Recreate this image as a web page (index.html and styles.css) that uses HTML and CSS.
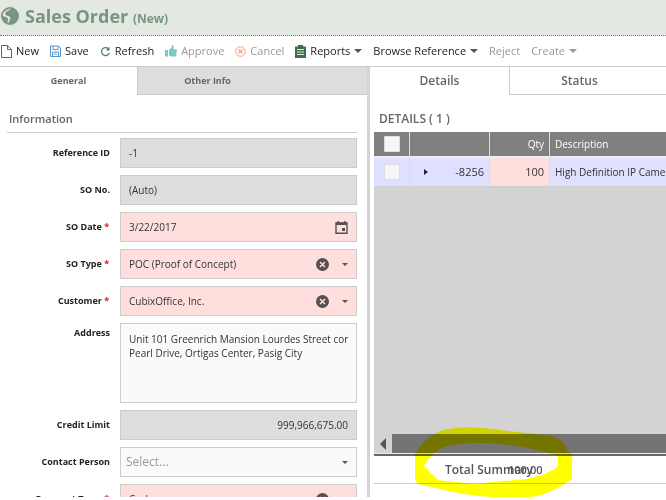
FILE: index.html
```html
<!DOCTYPE html>
<html lang="en">
<head>
<meta charset="utf-8">
<title>Sales Order</title>
<link rel="stylesheet" href="styles.css">
</head>
<body>
<header class="title-bar">
  <svg class="globe" viewBox="0 0 18 18" aria-hidden="true"><circle cx="9" cy="9" r="9" fill="#789581"/><path d="M10 1.500C6 2 2.500 4.500 1.500 8L3 9.500 6 10.500 7.500 12 6.500 14.500 7 16.500 8.500 14 9.500 11.500 8.500 9.500 5.500 8.500 4 7 5.500 4.500 7.500 3.500Z" fill="#e3e8e1"/></svg>
  <h1>Sales Order <small>(New)</small></h1>
</header>
<nav class="toolbar">
  <button type="button"><svg class="i-new" viewBox="0 0 11 13" aria-hidden="true"><path d="M.5.5h6l4 4v8H.5ZM6.500.5v4h4" fill="none" stroke="#666"/></svg>New</button>
  <button type="button"><svg class="i-save" viewBox="0 0 11 12" aria-hidden="true"><path d="M.5 1h8l2 2v8.500H.5ZM3 1v3.500h5V1M2.500 11.500V7h6v4.500M4 9h3" fill="none" stroke="#5795cc"/></svg>Save</button>
  <button type="button"><svg class="i-refresh" viewBox="0 0 11 11" aria-hidden="true"><path d="M8.500 2.800A4 4 0 1 0 9.300 7" fill="none" stroke="#4d7b60" stroke-width="1.200"/><path d="M9.500.8v3.700H5.800Z" fill="#4d7b60"/></svg>Refresh</button>
  <button type="button" disabled><svg class="i-thumb" viewBox="0 0 12 12" aria-hidden="true"><path d="M0 5h3v6.500H0ZM4 5l2.500-2.500L7 0c2 0 2 2 1.200 4.200H12L11 11.500H6L4 10.500Z" fill="#7ec8c0"/></svg>Approve</button>
  <button type="button" disabled><svg class="i-cancel" viewBox="0 0 11 11" aria-hidden="true"><circle cx="5.500" cy="5.500" r="4.800" fill="none" stroke="#f3a183"/><path d="m3.500 3.500 4 4m0-4-4 4" stroke="#f3a183" stroke-width="1.200"/></svg>Cancel</button>
  <button type="button"><svg class="i-report" viewBox="0 0 11 13" aria-hidden="true"><path d="M0 1.500h3V0h5v1.500h3V13H0Z" fill="#3e6e4b"/><path d="M2 4.500h7M2 7h7M2 9.500h7" stroke="#e3efe5"/></svg>Reports<i class="caret"></i></button>
  <button type="button">Browse Reference<i class="caret"></i></button>
  <button type="button" disabled>Reject</button>
  <button type="button" disabled>Create<i class="caret"></i></button>
</nav>
<main>
  <section class="form-pane">
    <div class="tabs left-tabs"><button type="button" class="active">General</button><button type="button">Other Info</button></div>
    <form>
      <h2>Information</h2>
      <div class="field"><label for="ref">Reference ID</label><div class="box off"><input id="ref" value="-1" readonly></div></div>
      <div class="field"><label for="no">SO No.</label><div class="box off"><input id="no" value="(Auto)" readonly></div></div>
      <div class="field"><label for="date">SO Date <b>*</b></label><div class="box req"><input id="date" value="3/22/2017"><svg class="i-cal" viewBox="0 0 13 13" aria-hidden="true"><path d="M1 2h11v10.200H1Z" fill="none" stroke="#575052" stroke-width="1.400"/><path d="M1 1.500h11V4H1ZM2.500 0H4v2H2.500ZM9 0h1.500v2H9ZM7 7h3v3H7Z" fill="#575052"/></svg></div></div>
      <div class="field"><label for="type">SO Type <b>*</b></label><div class="box req"><input id="type" value="POC (Proof of Concept)"><svg class="i-clear" viewBox="0 0 13 13" aria-hidden="true"><circle cx="6.500" cy="6.500" r="6.500" fill="#575052"/><path d="m4 4 5 5m0-5-5 5" stroke="#ffdede" stroke-width="1.500"/></svg><i class="caret small"></i></div></div>
      <div class="field"><label for="cust">Customer <b>*</b></label><div class="box req"><input id="cust" value="CubixOffice, Inc."><svg class="i-clear" viewBox="0 0 13 13" aria-hidden="true"><circle cx="6.500" cy="6.500" r="6.500" fill="#575052"/><path d="m4 4 5 5m0-5-5 5" stroke="#ffdede" stroke-width="1.500"/></svg><i class="caret small"></i></div></div>
      <div class="field top"><label for="addr">Address</label><textarea id="addr">Unit 101 Greenrich Mansion Lourdes Street cor Pearl Drive, Ortigas Center, Pasig City</textarea></div>
      <div class="field"><label for="credit">Credit Limit</label><div class="box off"><input id="credit" class="num" value="999,966,675.00" readonly></div></div>
      <div class="field"><label for="contact">Contact Person</label><div class="box pick"><input id="contact" placeholder="Select..."><i class="caret small"></i></div></div>
      <div class="field"><label for="term">Payment Term <b>*</b></label><div class="box req"><input id="term" value="Cash"><svg class="i-clear" viewBox="0 0 13 13" aria-hidden="true"><circle cx="6.500" cy="6.500" r="6.500" fill="#575052"/><path d="m4 4 5 5m0-5-5 5" stroke="#ffdede" stroke-width="1.500"/></svg><i class="caret small"></i></div></div>
    </form>
  </section>
  <section class="detail-pane">
    <div class="tabs right-tabs"><button type="button" class="active">Details</button><button type="button">Status</button></div>
    <h2>DETAILS ( 1 )</h2>
    <div class="grid">
      <table>
        <thead><tr><th class="c-check"><input type="checkbox" aria-label="Select all"></th><th class="c-id"></th><th class="c-qty">Qty</th><th class="c-desc">Description</th></tr></thead>
        <tbody><tr><td class="c-check"><input type="checkbox" aria-label="Select row"></td><td class="c-id"><div class="id-cell"><i class="expand"></i><span>-8256</span></div></td><td class="c-qty">100</td><td class="c-desc">High Definition IP Camera</td></tr></tbody>
      </table>
      <div class="scrollbar"><i class="arrow"></i><div class="thumb"></div></div>
      <div class="summary"><span class="sum-label">Total Summary</span><span class="sum-value">100.00</span>
        <svg class="marker" viewBox="0 0 162 74" aria-hidden="true"><path fill="#ff0" fill-rule="evenodd" d="M2 27C9 15 23 3 36 2C54-1 75 1 95 4L133 8C144 9 152 14 154 23L159 27V52C149 59 143 62 136 65C122 72 103 71 85 70C60 70 35 64 5 57L2 53ZM11 39L25 53L62 57L90 54C113 53 134 49 145 39V29C134 25 120 22 108 20C83 15 55 15 40 18C25 20 16 29 11 39Z"/></svg>
      </div>
    </div>
  </section>
</main>
</body>
</html>
```
FILE: styles.css
```css
* { box-sizing: border-box; }
body { margin: 0; height: 100vh; padding-bottom: 3px; overflow: hidden; display: flex; flex-direction: column; background: #fff; color: #333; font: 12px/16px "Open Sans", "Noto Sans", sans-serif; }
button, input, textarea { font: inherit; color: inherit; margin: 0; border: 0; background: none; padding: 0; }
svg { flex: none; }
h1, h2 { margin: 0; color: #666; }
.title-bar { flex: none; height: 36px; display: flex; align-items: center; gap: 6px; padding: 0 1px; background: #e3e8e1; border-bottom: 1px dotted #777; }
.globe { width: 18px; height: 18px; margin-bottom: 3px; }
h1 { font-size: 18px; line-height: 20px; color: #789581; }
h1 small { font-size: 12px; }
.toolbar { flex: none; height: 31px; display: flex; align-items: center; gap: 11px; padding-left: 1px; border-bottom: 1px solid #ccc; white-space: nowrap; font-size: 11px; color: #222; }
.toolbar button { display: flex; align-items: center; gap: 4px; }
.toolbar button:disabled { color: #999; }
.i-new, .i-report { width: 11px; height: 13px; }
.i-save { width: 11px; height: 12px; }
.i-refresh, .i-cancel { width: 11px; height: 11px; }
.i-thumb { width: 12px; height: 12px; }
.caret { flex: none; border: 4px solid transparent; border-top: 4px solid #555; border-bottom: 0; }
:disabled .caret { border-top-color: #999; }
.caret.small { border-width: 3px 3px 0; }
main { flex: 1; min-height: 0; display: flex; }
.form-pane { flex: 0 0 370px; border-right: 3px solid #d3d3d3; overflow: hidden; }
.detail-pane { flex: 1; min-width: 0; display: flex; flex-direction: column; overflow: hidden; }
.tabs { flex: none; display: flex; height: 28px; color: #666; font-weight: bold; }
.left-tabs { font-size: 9px; }
.left-tabs button { flex: 0 0 137px; }
.left-tabs button + button { flex: 1; padding-right: 90px; background: #ddd; border: solid #ccc; border-width: 0 0 1px 1px; }
.right-tabs { font-size: 12px; font-weight: 600; }
.right-tabs button { flex: 0 0 139px; }
.right-tabs button + button { flex: 1; padding-right: 17px; border: solid #ccc; border-width: 0 0 1px 1px; }
h2 { font-size: 11px; line-height: 16px; font-weight: 600; }
form { padding: 16px 10px 0 7px; display: flex; flex-direction: column; gap: 7px; font-size: 10px; }
form h2 { padding: 0 2px 5px; border-bottom: 1px solid #ccc; margin-bottom: -2px; }
.field { display: flex; align-items: center; gap: 10px; }
.field label { flex: 0 0 103px; text-align: right; font-size: 9px; font-weight: bold; color: #222; }
.field b { color: #d33; padding-right: 1px; }
.field.top { align-items: flex-start; }
.field.top label { padding-top: 2px; }
.box { flex: 1; min-width: 0; height: 30px; display: flex; align-items: center; gap: 13px; padding: 0 8px; border: 1px solid #ccc; background: #fafafa; }
.box.off { background: #ddd; }
.box.req { background: #ffdede; }
.box.pick { padding-left: 5px; }
.box input { flex: 1; min-width: 0; }
.box input::placeholder { font-size: 12px; color: #999; }
.box input.num { text-align: right; }
.i-cal, .i-clear { width: 13px; height: 13px; }
textarea { flex: 1; min-width: 0; height: 80px; padding: 8px 4px 8px 8px; border: 1px solid #ccc; background: #fafafa; resize: none; line-height: 14px; overflow: hidden; }
.detail-pane h2 { padding: 16px 9px 5px; font-size: 12px; }
.grid { flex: 1; margin-left: 4px; display: flex; flex-direction: column; background: #d3d3d3; font-size: 11px; }
table { width: 100%; table-layout: fixed; border-collapse: separate; border-spacing: 0; white-space: nowrap; }
th, td { padding: 0 5px; border-right: 1px solid #ddd; font-weight: normal; overflow: hidden; text-align: left; }
th { height: 26px; background: #808080; color: #fff; border-bottom: 2px solid #eee; font-size: 10px; }
td { height: 29px; background: #dfdfff; border-bottom: 1px solid #ccc; }
.c-check { width: 36px; text-align: center; }
.c-id { width: 80px; }
.c-qty { width: 60px; text-align: right; }
td.c-qty { background: #ffdede; }
.c-desc { border-right: 0; font-size: 10px; }
.id-cell { display: flex; justify-content: space-between; align-items: center; padding-left: 9px; }
.expand { border: 3px solid transparent; border-left: 4px solid #222; border-right: 0; }
input[type="checkbox"] { appearance: none; display: block; width: 16px; height: 16px; margin: 0 auto; background: #f6f6f6; border: 1px solid #ddd; }
.scrollbar { margin-top: auto; height: 20px; display: flex; align-items: center; gap: 6px; padding-left: 6px; border-bottom: 1px solid #eee; }
.arrow { border: 6px solid transparent; border-right: 6px solid #555; border-left: 0; }
.thumb { flex: 1; align-self: stretch; background: #747474; }
.summary { position: relative; height: 43px; border-top: 2px solid #666; background: #fff; font-weight: 600; color: #555; }
.summary::after { content: ""; display: block; height: 27px; border-bottom: 1px solid #ccc; }
.sum-label, .sum-value { position: absolute; top: 6px; }
.sum-label { left: 71px; font-size: 12px; }
.sum-value { left: 134px; }
.marker { position: absolute; left: 39px; top: -29px; width: 162px; height: 74px; mix-blend-mode: multiply; }
```
